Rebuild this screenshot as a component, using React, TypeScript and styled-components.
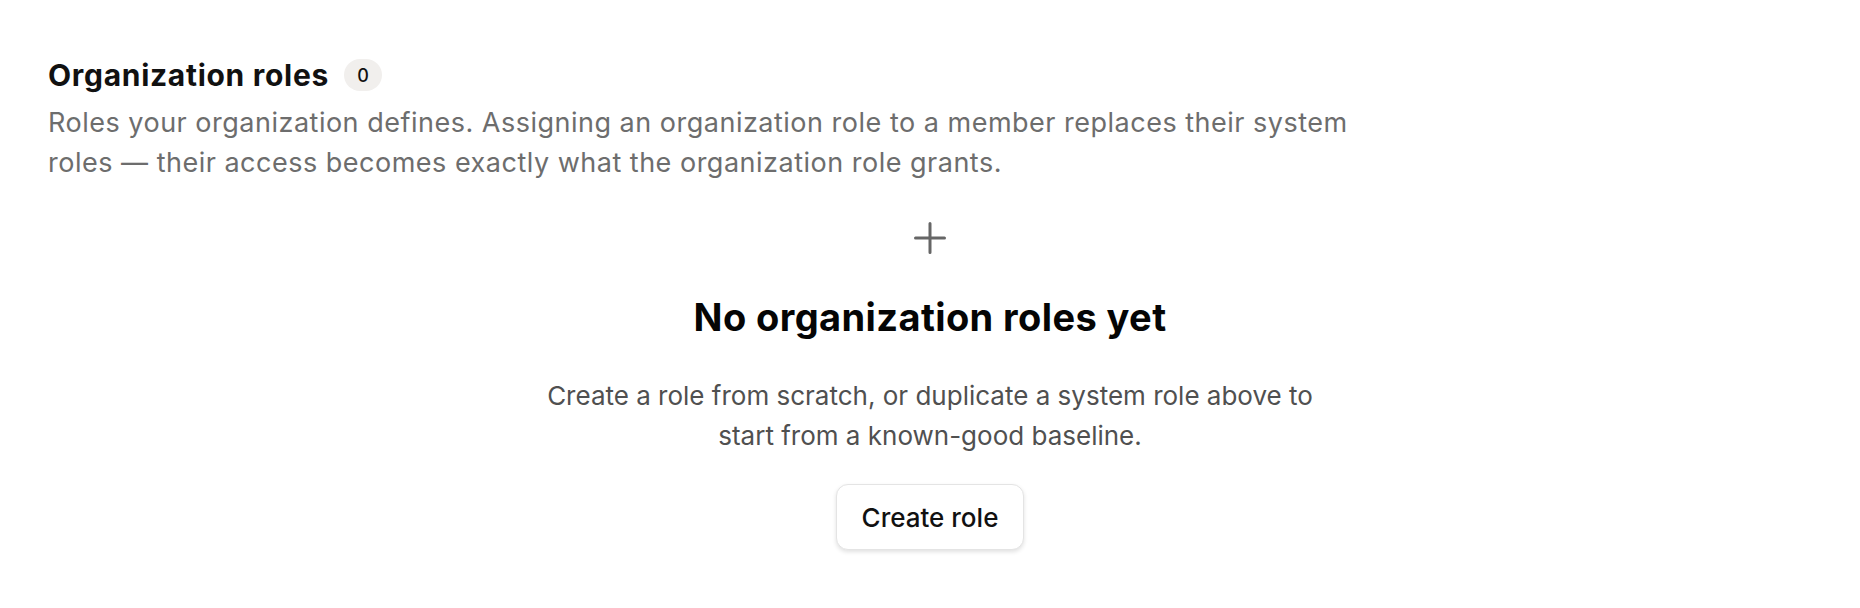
import styled, { createGlobalStyle } from "styled-components"

const GlobalStyle = createGlobalStyle`
  body {
    margin: 0;
    background: #ffffff;
    font-family: Inter, "Noto Sans", sans-serif;
    -webkit-font-smoothing: antialiased;
  }
`

const PlusIcon = () => (
  <svg width="32" height="32" viewBox="0 0 32 32" fill="none" stroke="#666666" strokeWidth="3" strokeLinecap="round">
    <path d="M16 1.5v29M1.5 16h29" />
  </svg>
)

const App = () => {
  const roles: { id: number; name: string }[] = []

  return (
    <>
      <GlobalStyle />
      <Page>
        <Header>
          <TitleRow>
            <Title>Organization roles</Title>
            <CountBadge>{roles.length}</CountBadge>
          </TitleRow>
          <Description>
            Roles your organization defines. Assigning an organization role to a member replaces their system
            roles — their access becomes exactly what the organization role grants.
          </Description>
        </Header>
        <EmptyState>
          <IconWrap>
            <PlusIcon />
          </IconWrap>
          <EmptyTitle>No organization roles yet</EmptyTitle>
          <EmptyText>
            Create a role from scratch, or duplicate a system role above to start from a known-good baseline.
          </EmptyText>
          <CreateButton type="button">Create role</CreateButton>
        </EmptyState>
      </Page>
    </>
  )
}

export default App

const Page = styled.div`
  padding: 57px 48px 40px;
`

const Header = styled.div`
  display: flex;
  flex-direction: column;
  gap: 10px;
`

const TitleRow = styled.div`
  display: flex;
  align-items: center;
  gap: 15px;
`

const Title = styled.h2`
  margin: 0;
  font-size: 30px;
  line-height: 36px;
  font-weight: 700;
  color: #111111;
  letter-spacing: 0.7px;
`

const CountBadge = styled.span`
  display: inline-flex;
  align-items: center;
  justify-content: center;
  min-width: 38px;
  height: 32px;
  padding: 0 12px;
  box-sizing: border-box;
  border-radius: 16px;
  background: #f1efed;
  color: #111111;
  font-size: 18px;
  font-weight: 500;
`

const Description = styled.p`
  margin: 0;
  max-width: 1340px;
  font-size: 27px;
  line-height: 40px;
  letter-spacing: 0.5px;
  color: #6d6d6d;
`

const EmptyState = styled.div`
  display: flex;
  flex-direction: column;
  align-items: center;
  text-align: center;
  padding-top: 39px;
`

const IconWrap = styled.div`
  width: 32px;
  height: 32px;
  margin-bottom: 41px;
`

const EmptyTitle = styled.h3`
  margin: 0 0 37px;
  font-size: 38px;
  line-height: 44px;
  font-weight: 700;
  color: #050505;
  letter-spacing: 0.4px;
`

const EmptyText = styled.p`
  margin: 0 0 28px;
  max-width: 780px;
  font-size: 26px;
  line-height: 40px;
  color: #505050;
`

const CreateButton = styled.button`
  height: 66px;
  padding: 0 25px;
  border: 1px solid #e4e4e4;
  border-radius: 12px;
  background: #ffffff;
  box-shadow: 0 2px 4px rgba(0, 0, 0, 0.12);
  font-family: inherit;
  font-size: 26px;
  font-weight: 500;
  color: #111111;
  cursor: pointer;
`
